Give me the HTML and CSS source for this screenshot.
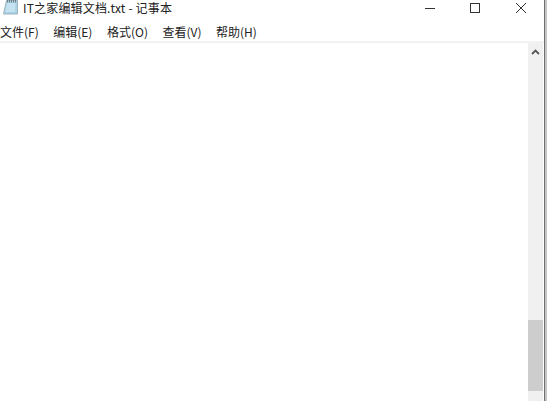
FILE: index.html
```html
<!DOCTYPE html>
<html lang="zh-CN">

<head>
    <meta charset="UTF-8">
    <meta name="viewport" content="width=device-width, initial-scale=1.0">
    <title>IT之家编辑文档.txt - 记事本</title>
    <link rel="stylesheet" href="styles.css">
</head>

<body>
    <div class="window">
        <div class="titlebar">
            <svg class="app-icon" width="15" height="15" viewBox="0 0 15 15">
                <path d="M3.500 0.500H14.500V14H0.500z" fill="#a8d2e6" stroke="#9fb4c0" stroke-width="1"/>
                <path d="M4 3h8.500L12 12H2.500z" fill="#c4e2f0"/>
                <path d="M4.500 0v2.500M6.500 0v2.500M8.500 0v2.500M10.500 0v2.500M12.500 0v2.500" stroke="#6f7c85" stroke-width="1"/>
            </svg>
            <span class="title">IT之家编辑文档.txt - 记事本</span>
            <div class="caption-buttons">
                <svg class="caption-btn min" width="12" height="12" viewBox="0 0 12 12">
                    <path d="M1 6.500h10" stroke="#333" stroke-width="1"/>
                </svg>
                <svg class="caption-btn max" width="12" height="12" viewBox="0 0 12 12">
                    <rect x="1.500" y="1.500" width="9" height="9" fill="none" stroke="#333" stroke-width="1"/>
                </svg>
                <svg class="caption-btn close" width="12" height="12" viewBox="0 0 12 12">
                    <path d="M1 1l10 10M11 1L1 11" stroke="#333" stroke-width="1"/>
                </svg>
            </div>
        </div>
        <div class="menubar">
            <span class="menu-item">文件(F)</span>
            <span class="menu-item">编辑(E)</span>
            <span class="menu-item">格式(O)</span>
            <span class="menu-item">查看(V)</span>
            <span class="menu-item">帮助(H)</span>
        </div>
        <div class="content">
            <div class="editor"></div>
            <div class="scrollbar">
                <div class="arrow-box">
                    <svg width="9" height="6" viewBox="0 0 9 6">
                        <path d="M1 5l3.500-3.500L8 5" fill="none" stroke="#555" stroke-width="1.800"/>
                    </svg>
                </div>
                <div class="track"></div>
                <div class="thumb"></div>
                <div class="track-end"></div>
            </div>
        </div>
    </div>
</body>

</html>
```

FILE: styles.css
```css
html, body {
    height: 100%;
}

body {
    margin: 0;
    background-color: #ffffff;
    font-family: "Noto Sans CJK SC", "Liberation Sans", sans-serif;
    color: #222222;
    overflow: hidden;
}

.window {
    display: flex;
    flex-direction: column;
    width: 545px;
    height: 401px;
    box-sizing: border-box;
    border-right: 1px solid #6e6e6e;
    box-shadow: 2px 0 0 #c4c4c4;
}

.titlebar {
    display: flex;
    align-items: center;
    height: 15px;
    padding-left: 3px;
}

.app-icon {
    flex: none;
}

.title {
    margin-left: 5px;
    font-size: 12px;
    line-height: 15px;
    letter-spacing: 0.17px;
    white-space: nowrap;
}

.caption-buttons {
    display: flex;
    margin-left: auto;
    gap: 33px;
    padding-right: 17px;
}

.close {
    margin-left: 1px;
}

.menubar {
    display: flex;
    gap: 14.5px;
    height: 28px;
    padding-top: 8px;
    box-sizing: border-box;
    border-bottom: 2px solid #f2f2f2;
    align-items: center;
}

.menu-item {
    font-size: 12px;
    line-height: 16px;
    white-space: nowrap;
}

.content {
    display: flex;
    flex: 1;
    min-height: 0;
}

.editor {
    flex: 1;
}

.scrollbar {
    display: flex;
    flex-direction: column;
    width: 15px;
    margin-right: 1px;
    background-color: #f0f0f0;
}

.arrow-box {
    display: flex;
    justify-content: center;
    align-items: center;
    height: 18px;
}

.track {
    flex: 1;
}

.thumb {
    height: 71px;
    background-color: #cdcdcd;
}

.track-end {
    height: 10px;
}
```
